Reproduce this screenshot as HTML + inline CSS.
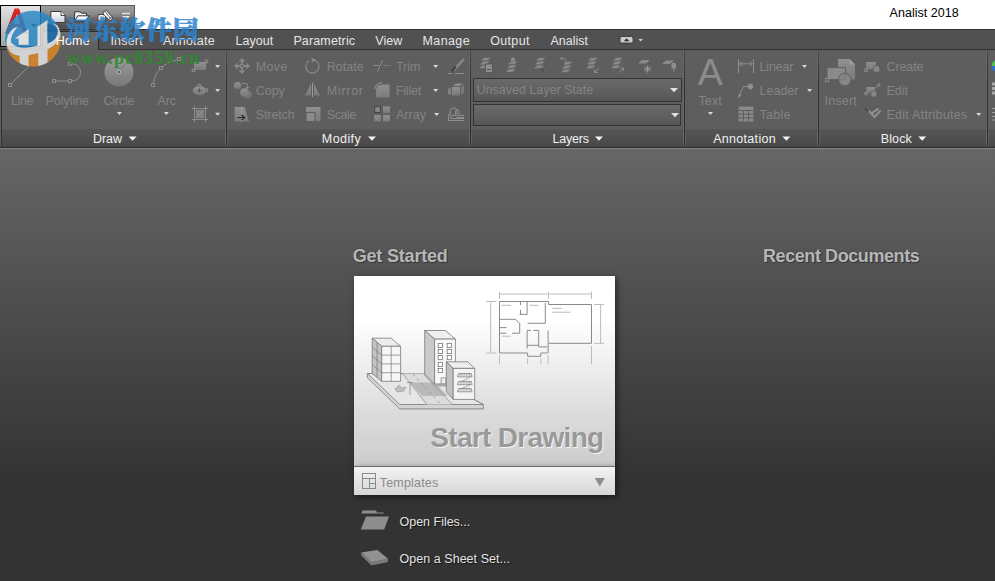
<!DOCTYPE html>
<html lang="en"><head><meta charset="utf-8"><title>Analist 2018</title>
<style>
html,body{margin:0;padding:0}
body{width:995px;height:581px;overflow:hidden;position:relative;background:#fff;font-family:"Liberation Sans",sans-serif}
.a{position:absolute}
.t{position:absolute;white-space:pre;font-family:"Liberation Sans",sans-serif}
svg{position:absolute;overflow:visible}
#bodybg{left:0;top:149px;width:995px;height:432px;background:linear-gradient(#666 0,#333 76.5%,#333 100%)}
#tabbar{left:0;top:29px;width:995px;height:20px;background:#515151;border-top:1px solid #2e2e2e;box-sizing:border-box}
#ribbon{left:0;top:49px;width:995px;height:98px;background:#5e5e5e;border-top:1px solid #2f2f2f;box-sizing:border-box}
#ribbot1{left:0;top:146px;width:995px;height:2px;background:linear-gradient(#444 0,#444 50%,#2c2c2c 50%,#2c2c2c 100%)}
#ribbot2{left:0;top:148px;width:995px;height:1px;background:#858585}
#hometab{left:42px;top:31px;width:57px;height:19px;background:linear-gradient(#6a6a6a,#5e5e5e);border:1px solid #2e2e2e;border-bottom:0;box-sizing:border-box}
#qat{left:41px;top:5px;width:94px;height:24px;background:linear-gradient(#9e9e9e 0,#8a8a8a 38%,#646464 62%,#4c4c4c 100%);border:1px solid #5a5a5a;border-left:0;box-sizing:border-box}
#appbtn{left:0;top:5px;width:41px;height:42px;background:linear-gradient(#e2e2e2,#a2a2a2);border:1px solid #000;box-sizing:border-box}
.ps{position:absolute;top:129px;height:17px;background:linear-gradient(#555,#494949)}
.sepd0{position:absolute;top:50px;height:97px;width:1px;left:1px;background:#303030}
.sepd{position:absolute;top:50px;height:97px;width:1px;background:linear-gradient(#4a4a4a 0,#303030 35%,#2e2e2e 100%)}
.sepl{position:absolute;top:50px;height:97px;width:1px;background:#666}
.combo{position:absolute;left:473px;width:209px;box-sizing:border-box;border:1px solid #333;background:linear-gradient(#6a6a6a,#575757)}
#card{left:354px;top:276px;width:261px;height:190px;background:linear-gradient(#fff 0,#fff 22%,#f0f0f0 45%,#dcdcdc 72%,#cccccc 100%);box-shadow:2px 2px 6px rgba(0,0,0,.55)}
#tpl{left:354px;top:466px;width:261px;height:29px;background:linear-gradient(#f3f3f3,#d6d6d6);border-top:1px solid #6e6e6e;box-sizing:border-box;box-shadow:2px 2px 6px rgba(0,0,0,.55)}

</style></head>
<body>
<div class="a" id="bodybg"></div>
<div class="a" id="tabbar"></div>
<div class="a" id="ribbon"></div>
<div class="a" id="hometab"></div>
<div class="a" id="qat"></div>
<div class="a" id="appbtn"></div>
<!-- panel title strips -->
<div class="ps" style="left:2px;width:223px"></div>
<div class="ps" style="left:228px;width:241px"></div>
<div class="ps" style="left:472px;width:211px"></div>
<div class="ps" style="left:686px;width:131px"></div>
<div class="ps" style="left:820px;width:166px"></div>
<div class="ps" style="left:989px;width:6px"></div>
<div class="sepd0"></div>
<div class="sepl" style="left:225px"></div><div class="sepd" style="left:226px"></div>
<div class="sepl" style="left:469px"></div><div class="sepd" style="left:470px"></div>
<div class="sepl" style="left:683px"></div><div class="sepd" style="left:684px"></div>
<div class="sepl" style="left:817px"></div><div class="sepd" style="left:818px"></div>
<div class="sepl" style="left:986px"></div><div class="sepd" style="left:987px"></div>
<div class="a" id="ribbot1"></div>
<div class="a" id="ribbot2"></div>
<div class="combo" style="top:78px;height:24px"></div>
<div class="combo" style="top:104px;height:22px;width:208px"></div>
<div class="a" id="card"></div>
<div class="a" id="tpl"></div>

<svg width="995" height="581" viewBox="0 0 995 581" style="left:0;top:0">
<defs><linearGradient id="gc" x1="0" y1="0" x2="0" y2="1"><stop offset="0" stop-color="#9c9c9c"/><stop offset="1" stop-color="#787878"/></linearGradient><linearGradient id="gi" x1="0" y1="0" x2="0" y2="1"><stop offset="0" stop-color="#909090"/><stop offset="1" stop-color="#7a7a7a"/></linearGradient></defs>
<path d="M10,85L35,60" stroke="#8e8e8e" stroke-width="1" fill="none"/>
<rect x="8.5" y="83.5" width="3" height="3" fill="#5e5e5e" stroke="#8e8e8e" stroke-width="1"/>
<rect x="33.5" y="58.5" width="3" height="3" fill="#5e5e5e" stroke="#8e8e8e" stroke-width="1"/>
<path d="M54,81H72A8.6,8.6 0 0 0 72,63.8H70" stroke="#8e8e8e" stroke-width="1" fill="none"/>
<rect x="52.5" y="79.5" width="3" height="3" fill="#5e5e5e" stroke="#8e8e8e" stroke-width="1"/>
<rect x="68.5" y="79.5" width="3" height="3" fill="#5e5e5e" stroke="#8e8e8e" stroke-width="1"/>
<rect x="68.5" y="62.3" width="3" height="3" fill="#5e5e5e" stroke="#8e8e8e" stroke-width="1"/>
<circle cx="119" cy="72" r="14.5" fill="url(#gc)"/>
<path d="M119,72L128,61" stroke="#7c7c7c" stroke-width="1"/>
<rect x="117.5" y="70.5" width="3" height="3" fill="#5e5e5e" stroke="#aaa" stroke-width="1"/>
<path d="M153,85Q155,64 179,59" stroke="#8e8e8e" stroke-width="1" fill="none"/>
<rect x="151.5" y="83.5" width="3" height="3" fill="#5e5e5e" stroke="#8e8e8e" stroke-width="1"/>
<rect x="159.5" y="66.5" width="3" height="3" fill="#5e5e5e" stroke="#8e8e8e" stroke-width="1"/>
<rect x="177.5" y="57.5" width="3" height="3" fill="#5e5e5e" stroke="#8e8e8e" stroke-width="1"/>
<path d="M116.9,111.9h5l-2.5,3z" fill="#d8d8d8"/>
<path d="M163.8,111.9h5l-2.5,3z" fill="#d8d8d8"/>
<rect x="194" y="62" width="12" height="8" fill="url(#gi)"/>
<rect x="205.2" y="60.2" width="2.5" height="2.5" fill="#5e5e5e" stroke="#8e8e8e" stroke-width="1"/>
<rect x="192.2" y="69.2" width="2.5" height="2.5" fill="#5e5e5e" stroke="#8e8e8e" stroke-width="1"/>
<ellipse cx="199.4" cy="90.6" rx="6.6" ry="4.6" fill="url(#gi)"/>
<rect x="198.2" y="84.5" width="2.5" height="2.5" fill="#5e5e5e" stroke="#8e8e8e" stroke-width="1"/>
<rect x="205.1" y="89.0" width="2.5" height="2.5" fill="#5e5e5e" stroke="#8e8e8e" stroke-width="1"/>
<path d="M197.5,90.6h4M199.5,88.6v4" stroke="#555" stroke-width="1"/>
<path d="M192,108.5h16M192,119.5h16M194.5,106v16M205.5,106v16" stroke="#8e8e8e" stroke-width="1"/>
<rect x="196" y="110" width="8" height="8" fill="#8a8a8a"/>
<path d="M196,113l3,-3M196,116l6,-6M198,118l6,-6M201,118l3,-3" stroke="#707070" stroke-width="1"/>
<path d="M215.1,65.0h5l-2.5,3z" fill="#d8d8d8"/>
<path d="M215.1,88.9h5l-2.5,3z" fill="#d8d8d8"/>
<path d="M215.1,112.8h5l-2.5,3z" fill="#d8d8d8"/>
<path d="M242,58l3.5,3.5h-2.5v2.5h-2v-2.5h-2.5zM242,74l3.5,-3.5h-2.5v-2.5h-2v2.5h-2.5zM234,66l3.5,-3.5v2.5h2.5v2h-2.5v2.5zM250,66l-3.5,-3.5v2.5h-2.5v2h2.5v2.5z" fill="#868686"/>
<rect x="240.5" y="64.5" width="3" height="3" fill="none" stroke="#868686"/>
<circle cx="248" cy="94.5" r="4" fill="#747474"/><circle cx="237.5" cy="85.5" r="3.6" fill="url(#gi)"/><circle cx="244.3" cy="92.5" r="4.3" fill="url(#gi)"/>
<path d="M242,83.5h3.5a2,2 0 0 1 2,2v2" stroke="#8e8e8e" fill="none"/><path d="M245.5,87h4l-2,2.5z" fill="#8e8e8e"/>
<path d="M234.5,107h10l4.5,14.5h-14.5z" fill="url(#gi)"/><path d="M241.5,106.5v15.5" stroke="#9a9a9a" stroke-width="1"/>
<path d="M237.5,117.5h6M241.5,115l3,2.5l-3,2.5" stroke="#2a2a2a" stroke-width="1.2" fill="none"/>
<path d="M314.5,60.2A6.6,6.6 0 1 1 309,60.8" stroke="#868686" stroke-width="1.3" fill="none"/><path d="M311.5,57.5l5,2.6l-4.6,2.6z" fill="#868686"/>
<path d="M311,84v11.5h-6zM314,84v11.5h6z" fill="url(#gi)"/><path d="M312.5,82.5v14.5" stroke="#9a9a9a" stroke-width="1"/>
<rect x="306" y="107" width="14.5" height="14.5" fill="url(#gi)"/><rect x="306" y="112.5" width="9" height="9" fill="#8c8c8c" stroke="#5e5e5e" stroke-width="1.2"/>
<path d="M374,65.5h4.5M377.4,71.6L382.7,60" stroke="#8e8e8e" stroke-width="1" fill="none"/><path d="M383.5,65.5h7" stroke="#8e8e8e" stroke-width="1" stroke-dasharray="1.5,1.2"/>
<path d="M376,97.5v-7a6,6 0 0 1 6,-6h7.5v13z" fill="url(#gi)"/>
<path d="M374.5,89a9,9 0 0 1 7.5,-6.5" stroke="#868686" stroke-width="1.3" fill="none"/>
<rect x="374.7" y="106.8" width="5.6" height="5.6" fill="#8c8c8c" stroke="#444" stroke-width="1"/>
<rect x="383" y="106.3" width="7" height="6.6" fill="url(#gi)"/><rect x="374.2" y="115" width="6.6" height="6.6" fill="url(#gi)"/><rect x="383" y="115" width="7" height="6.6" fill="url(#gi)"/>
<path d="M433.2,64.9h5l-2.5,3z" fill="#d8d8d8"/>
<path d="M433.2,88.9h5l-2.5,3z" fill="#d8d8d8"/>
<path d="M434.2,112.9h5l-2.5,3z" fill="#d8d8d8"/>
<path d="M464,59L453,71" stroke="#8a8a8a" stroke-width="2.4"/><path d="M455.5,66.5L452,71.5" stroke="#444" stroke-width="2.4"/><path d="M448,73.5h4M455,73.5h9" stroke="#8e8e8e" stroke-width="1"/>
<path d="M452,87h8v8.5h-8z" fill="url(#gi)"/><path d="M453,86l3,-2.5h7l-3,2.5z" fill="#8c8c8c"/><path d="M461,87l3,-2.5v8l-3,2.5z" fill="#7a7a7a"/><path d="M448,89l3,-2v8l-3,-1z" fill="#808080"/>
<path d="M448.5,120.5h15.5M464,117.5h-7v-6a3.5,3.5 0 0 0 -7,0v3h-1.5v6" stroke="#8e8e8e" stroke-width="1" fill="none"/><path d="M464,115.5h-5v-4.5a1.8,1.8 0 0 0 -3.4,0v4.5h-5v3h13.4" stroke="#8e8e8e" stroke-width="1" fill="none"/>
<path d="M484.2,57.8h6.5l-3.2,2.8h-6.5z" fill="#888888"/>
<path d="M483.2,61.6h6.5l-3.2,2.8h-6.5z" fill="#888888"/>
<path d="M482.2,65.4h6.5l-3.2,2.8h-6.5z" fill="#888888"/>
<rect x="485.5" y="64" width="7" height="8.5" fill="#8e8e8e" stroke="#505050" stroke-width=".8"/><path d="M487,69.5h4" stroke="#555" stroke-width="1"/>
<path d="M511.2,61.5h6.5l-3.2,2.8h-6.5z" fill="#888888"/>
<path d="M510.2,65.3h6.5l-3.2,2.8h-6.5z" fill="#888888"/>
<path d="M509.2,69.1h6.5l-3.2,2.8h-6.5z" fill="#888888"/>
<circle cx="513" cy="59.6" r="2.2" fill="#8a8a8a"/>
<path d="M539.2,57.8h6.5l-3.2,2.8h-6.5z" fill="#888888"/>
<path d="M538.2,61.6h6.5l-3.2,2.8h-6.5z" fill="#888888"/>
<path d="M537.2,65.4h6.5l-3.2,2.8h-6.5z" fill="#888888"/>
<path d="M542,67l4,4" stroke="#8e8e8e" stroke-width="1"/><circle cx="543" cy="70" r="2" fill="#555"/>
<path d="M566.2,61.8h6.5l-3.2,2.8h-6.5z" fill="#888888"/>
<path d="M565.2,65.6h6.5l-3.2,2.8h-6.5z" fill="#888888"/>
<path d="M564.2,69.4h6.5l-3.2,2.8h-6.5z" fill="#888888"/>
<path d="M560.5,58.5h3a2.5,2.5 0 0 1 2.5,2.5v1M560.5,58.5l2,-1.8M560.5,58.5l2,1.8" stroke="#8e8e8e" fill="none"/>
<path d="M591.2,57.8h6.5l-3.2,2.8h-6.5z" fill="#888888"/>
<path d="M590.2,61.6h6.5l-3.2,2.8h-6.5z" fill="#888888"/>
<path d="M589.2,65.4h6.5l-3.2,2.8h-6.5z" fill="#888888"/>
<path d="M599,68l-4.5,4.5M594.5,69.5v3h3" stroke="#8e8e8e" fill="none"/>
<path d="M616.2,57.8h6.5l-3.2,2.8h-6.5z" fill="#888888"/>
<path d="M615.2,61.6h6.5l-3.2,2.8h-6.5z" fill="#888888"/>
<path d="M614.2,65.4h6.5l-3.2,2.8h-6.5z" fill="#888888"/>
<path d="M619,72.5l4.5,-4.5M620.5,68h3v3" stroke="#8e8e8e" fill="none"/>
<path d="M642,60h8l-4,3.6h-8z" fill="#8a8a8a"/>
<path d="M644,69h7M647.5,65.5v7M645,66.5l5,5M650,66.5l-5,5" stroke="#9a9a9a" stroke-width="1"/>
<path d="M666,60.5h8l-4,3.6h-8z" fill="#8a8a8a"/>
<path d="M671.5,65a2.3,2.6 0 0 1 4.6,0v3.5h-4.6z" fill="#8e8e8e"/><path d="M673.8,68.5v3.5" stroke="#8e8e8e"/>
<path d="M670.0,88.1h8l-4.0,4.2z" fill="#e2e2e2"/>
<path d="M671.0,113.1h8l-4.0,4.2z" fill="#e2e2e2"/>
<path d="M708.0,112.1h5l-2.5,3z" fill="#d8d8d8"/>
<path d="M738.5,59v14M753.5,59v14M739.5,63.8h13M742.5,61.5l-3,2.3l3,2.3M749.5,61.5l3,2.3l-3,2.3" stroke="#8e8e8e" stroke-width="1" fill="none"/>
<circle cx="750.4" cy="86.6" r="2.8" fill="#8e8e8e"/><path d="M748,86.6h-4.5l-4.5,9.5" stroke="#8e8e8e" fill="none"/><path d="M738.3,98l0.2,-4.5l3.3,1.7z" fill="#8e8e8e"/>
<rect x="738.7" y="106.4" width="14.8" height="15.2" fill="#8a8a8a"/><path d="M738.7,110.5h14.8M738.7,114.2h14.8M738.7,117.9h14.8M743.5,110.5v11M748.5,110.5v11" stroke="#5e5e5e" stroke-width="1"/><rect x="738.7" y="106.4" width="14.8" height="15.2" fill="none" stroke="#6e6e6e" stroke-width=".8"/>
<path d="M802.0,64.9h5l-2.5,3z" fill="#d8d8d8"/>
<path d="M807.1,88.9h5l-2.5,3z" fill="#d8d8d8"/>
<path d="M838,59h11.5l5.5,5.5v15h-17z" fill="url(#gi)"/><path d="M849.5,59v5.5h5.5z" fill="#a0a0a0"/>
<rect x="827" y="67.6" width="18.5" height="12" fill="#8a8a8a" stroke="#5e5e5e" stroke-width="1"/>
<circle cx="844.8" cy="79.6" r="6.3" fill="#868686" stroke="#5e5e5e" stroke-width="1"/><path d="M844.8,73.5v6.1h-6" stroke="#7a7a7a" fill="none"/>
<rect x="825.4" y="78.4" width="3.2" height="3.2" fill="#5e5e5e" stroke="#8e8e8e" stroke-width="1"/>
<rect x="866.2" y="62" width="9.6" height="7.3" fill="url(#gi)"/><circle cx="876.5" cy="69" r="3.6" fill="#868686" stroke="#5e5e5e" stroke-width=".8"/>
<rect x="864.8" y="69.0" width="2.4" height="2.4" fill="#5e5e5e" stroke="#8e8e8e" stroke-width="1"/>
<rect x="866.5" y="87" width="8.5" height="6" fill="url(#gi)"/><circle cx="873.8" cy="94" r="3.2" fill="#868686" stroke="#5e5e5e" stroke-width=".8"/>
<rect x="864.9" y="92.4" width="2.2" height="2.2" fill="#5e5e5e" stroke="#8e8e8e" stroke-width="1"/>
<path d="M876,88l4,-5M877.5,84.5l3,2" stroke="#8c8c8c" stroke-width="1.2"/>
<path d="M865,107.5l1.5,3.5h3" stroke="#444" fill="none"/><path d="M869,111l5.5,6l6,-6.5" stroke="#8e8e8e" stroke-width="2.2" fill="none"/><path d="M872,113l6.5,-4.5" stroke="#9a9a9a" stroke-width="1.6"/>
<path d="M976.2,112.9h5l-2.5,3z" fill="#d8d8d8"/>
<circle cx="998" cy="66" r="6.300" fill="#2f6fd8"/><path d="M991.700,66a6.300,6.300 0 0 1 3.300,-5.500v5.500z" fill="#58c048"/>
<path d="M992,84h3M992,88.500h3M992,93h3" stroke="#a8a8a8" stroke-width="3"/><path d="M992,108.500h3M992,112.500h3M992,116.500h3M992,120h3" stroke="#a0a0a0" stroke-width="1"/>
<rect x="620" y="36.500" width="13" height="6.500" rx="1.600" fill="#c6cad2" stroke="#2e2e2e" stroke-width=".8"/><path d="M623.8,41.3l2.8,-3l2.8,3z" fill="#333"/>
<path d="M638.3,39.0h4.6l-2.3,2.6z" fill="#d0d0d0"/>
<path d="M128.6,136.4h8l-4.0,4.4z" fill="#f4f4f4"/>
<path d="M368.0,136.4h8l-4.0,4.4z" fill="#f4f4f4"/>
<path d="M595.0,136.4h8l-4.0,4.4z" fill="#f4f4f4"/>
<path d="M782.4,136.4h8l-4.0,4.4z" fill="#f4f4f4"/>
<path d="M918.2,136.4h8l-4.0,4.4z" fill="#f4f4f4"/>
</svg>
<svg width="995" height="581" viewBox="0 0 995 581" style="left:0;top:0">
<defs>
<linearGradient id="doc" x1="0" y1="0" x2="0" y2="1"><stop offset="0" stop-color="#ffffff"/><stop offset="1" stop-color="#c8cfe0"/></linearGradient>
<linearGradient id="red" x1="0" y1="0" x2="0" y2="1"><stop offset="0" stop-color="#e02a2a"/><stop offset="1" stop-color="#a01414"/></linearGradient>
<linearGradient id="fold" x1="0" y1="0" x2="0" y2="1"><stop offset="0" stop-color="#ffffff"/><stop offset=".55" stop-color="#e8eef8"/><stop offset="1" stop-color="#6f9fdc"/></linearGradient>
<clipPath id="lc"><circle cx="33" cy="38.7" r="28"/></clipPath>
</defs>
<path d="M367.4,373.5H424.7L483.3,404.5V408.9H399.8L367.4,377.8z" fill="#d4d4d4" stroke="#787878" stroke-width=".8"/>
<path d="M367.4,373.5H424.7L483.3,404.5H399.8z" fill="#e6e6e6" stroke="#787878" stroke-width=".8"/>
<path d="M402.500,373.500H424L452.500,404.500H426z" fill="#dcdcdc"/>
<path d="M409.800,382.500L434.600,382.500L448,395.900H422.200z" fill="#adadad" opacity=".75"/>
<path d="M402.5,373.5L427,404.5M424,374.5L452.5,404.5" stroke="#8a8a8a" stroke-width=".7"/>
<path d="M413,374L441,404.5" stroke="#8a8a8a" stroke-width=".7" stroke-dasharray="3,3"/>
<path d="M372.2,338.2H391.2L400.6,346.3H381.7z" fill="#ececec" stroke="#787878" stroke-width=".8"/>
<path d="M372.2,338.2L381.7,346.3V381.3L372.2,373.5z" fill="#c4c4c4" stroke="#787878" stroke-width=".8"/>
<path d="M381.7,346.3H400.6V381.3H381.7z" fill="#f6f6f6" stroke="#787878" stroke-width=".8"/>
<path d="M391.2,346.3V381.3M381.7,355.1H400.6M381.7,363.9H400.6M381.7,372.7H400.6M377,342.2V377.4M372.2,347L381.7,355.1M372.2,355.8L381.7,363.9M372.2,364.6L381.7,372.7" stroke="#787878" stroke-width=".7" fill="none"/>
<path d="M424.7,330.5H445.4L455.4,339.1H434.6z" fill="#f0f0f0" stroke="#787878" stroke-width=".8"/>
<path d="M424.7,330.5L434.6,339.1V383.9L424.7,374.4z" fill="#cacaca" stroke="#787878" stroke-width=".8"/>
<path d="M434.6,339.1H455.4V383.9H434.6z" fill="#f8f8f8" stroke="#787878" stroke-width=".8"/>
<rect x="438.2" y="343.4" width="4.2" height="4.2" fill="#fff" stroke="#787878" stroke-width=".8"/>
<rect x="447.2" y="343.4" width="4.2" height="4.2" fill="#fff" stroke="#787878" stroke-width=".8"/>
<rect x="438.2" y="349.4" width="4.2" height="4.2" fill="#fff" stroke="#787878" stroke-width=".8"/>
<rect x="447.2" y="349.4" width="4.2" height="4.2" fill="#fff" stroke="#787878" stroke-width=".8"/>
<rect x="438.2" y="355.5" width="4.2" height="4.2" fill="#fff" stroke="#787878" stroke-width=".8"/>
<rect x="447.2" y="355.5" width="4.2" height="4.2" fill="#fff" stroke="#787878" stroke-width=".8"/>
<rect x="438.2" y="362.4" width="4.2" height="4.2" fill="#fff" stroke="#787878" stroke-width=".8"/>
<rect x="447.2" y="362.4" width="4.2" height="4.2" fill="#fff" stroke="#787878" stroke-width=".8"/>
<rect x="438.2" y="368.4" width="4.2" height="4.2" fill="#fff" stroke="#787878" stroke-width=".8"/>
<rect x="447.2" y="368.4" width="4.2" height="4.2" fill="#fff" stroke="#787878" stroke-width=".8"/>
<rect x="441.1" y="377.9" width="4.8" height="6" fill="#eee" stroke="#787878" stroke-width=".7"/>
<path d="M434.6,383.9H455.4V386.5H437.5z" fill="#a8a8a8"/>
<path d="M446.3,361.8H467.8L474.7,368.4H453.2z" fill="#eeeeee" stroke="#787878" stroke-width=".8"/>
<path d="M446.3,361.8L453.2,368.4V399.4L446.3,391.6z" fill="#c2c2c2" stroke="#787878" stroke-width=".8"/>
<path d="M453.2,368.4H474.7V399.4H453.2z" fill="#f4f4f4" stroke="#787878" stroke-width=".8"/>
<path d="M458.5,373.5H471.2L472.1,376.9H457.5z" fill="#ddd" stroke="#787878" stroke-width=".7"/>
<path d="M461,373.5v2M464,373.5v2M467,373.5v2M469.6,373.5v2" stroke="#787878" stroke-width=".6"/>
<path d="M458.5,381.3H471.2L472.1,384.7H457.5z" fill="#ddd" stroke="#787878" stroke-width=".7"/>
<path d="M461,381.3v2M464,381.3v2M467,381.3v2M469.6,381.3v2" stroke="#787878" stroke-width=".6"/>
<path d="M458.5,388.4H471.2L472.1,391.79999999999995H457.5z" fill="#ddd" stroke="#787878" stroke-width=".7"/>
<path d="M461,388.4v2M464,388.4v2M467,388.4v2M469.6,388.4v2" stroke="#787878" stroke-width=".6"/>
<path d="M470,377L462,381.3M470,384.8L462,388.4" stroke="#787878" stroke-width=".6"/>
<path d="M395,389l4,-4l3,3l4,-1l-2,4l-7,1z" fill="#bdbdbd" stroke="#8a8a8a" stroke-width=".5"/>
<path d="M410,383v12M407,382.500h6" stroke="#8a8a8a" stroke-width=".8"/>
<path d="M499.5,301.5H548.6V304.5H591.5V343.3H548.6M548.1,330.4V353M499.5,301.5V353H527.6V356.3H540.8V353H547.6" stroke="#8a8a8a" stroke-width="1" fill="none"/>
<path d="M520.5,301.5V305M520.5,309.7V314.4M519.7,314.4H527.1V301.5M545.3,303.1V323.3H527.6M499.5,319.3H515.5L519.7,323.3V333.2H512.2M499.5,327.6H506.4M499.5,333.2H506.4M527.1,348.6V330.4H531M533.5,330.4H538.7V346.9H547.4M527.1,345.3H538.7" stroke="#8a8a8a" stroke-width="1" fill="none"/>
<path d="M501.5,305.3H511M529.6,305.3H538.2M552.4,308.4H561.8M552.4,312.2H570.5M502.3,336.200H511" stroke="#b8b8b8" stroke-width="1"/>
<path d="M499.5,294H548M549.6,294H591.5M499.5,291.6V299M548.6,291.6V299M591.5,291.6V299M490.7,302.3V352.7M486.3,301.5H496.5M486.3,353H496.5M600.6,304.8V343.3M594,304.5H604M594,343.3H604M499.5,355.2V364.3M527.6,358.5V364.3M540.8,358.5V364.3M548.1,355.2V364.3M591.5,346V364.3" stroke="#bcbcbc" stroke-width="1" fill="none"/>
<rect x="362.500" y="473.500" width="13" height="15" fill="none" stroke="#8a8a8a" stroke-width="1"/><path d="M362.500,478.500h13M369.500,478.500v10M369.500,483.500h6" stroke="#8a8a8a" stroke-width="1"/>
<path d="M594.8,478h10l-5,8.4z" fill="#8c8c8c"/>
<path d="M361.300,513.600l1.200,-3h13.500l1,1.800h6.600l.5,1.200zM366,516.500H389L384.100,529.500H360.800z" fill="#8e8e8e"/>
<path d="M361.300,552.500L371.500,562.200L388,558.700V562L371.500,565.600L361.300,555.600z" fill="#7a7a7a"/><path d="M361.300,552.500L377.300,550L388,558.700L371.500,562.200z" fill="#929292"/>
<path d="M50.800,11.500H61L65,15.500V22.500H50.800z" fill="url(#doc)" stroke="#3a3a3a" stroke-width="1"/><path d="M61,11.500V15.500H65" fill="#f4f6fa" stroke="#3a3a3a" stroke-width=".9"/>
<path d="M74.600,20.500V11.800H80L81.500,13.200H86.500V15.800" fill="#eef0f5" stroke="#333" stroke-width="1"/><path d="M74.600,21L77.800,15.800H89.200L85.500,21z" fill="url(#fold)" stroke="#333" stroke-width="1"/>
<path d="M98,14.500H105.500V21H98z" fill="#f4f6fa" stroke="#3a3a3a" stroke-width=".9"/><path d="M98.500,15l6,5.500M104.500,15l-6,5.500" stroke="#777" stroke-width=".7"/>
<path d="M103,12.200L106.500,10.400L113,18L110.200,21L103.600,14.800z" fill="#eceef2" stroke="#3a3a3a" stroke-width=".9"/><path d="M105,11.500l6.500,8M109.500,20.800a1.800,1.800 0 0 1 3,-2.600" stroke="#555" stroke-width=".8" fill="none"/>
<path d="M122,13.500h8" stroke="#e8e8e8" stroke-width="1.400"/><path d="M122,16h8l-4,4.200z" fill="#e8e8e8"/>
<path d="M5.200,33.500L14.600,8.500H19L27.800,33.500H23.300L21.200,27.500H12.600L10,33.500zM13.800,23.800H19.900L16.900,14z" fill="url(#red)" fill-rule="evenodd"/>
<path d="M31,24h6l-3,3.600z" fill="#222"/>
<path d="M0.500,47.500H41.500" stroke="#777" stroke-width="1" opacity=".0"/>
<g clip-path="url(#lc)" opacity=".84">
<rect x="4" y="9" width="59" height="60" fill="#2a8ac8"/>
<path d="M6.500,43C7,50 12,55 19.300,55.700C28,56.500 40,53 48.200,48.800C56,45 61,38 61.500,30L63,70H4z" fill="#de8a22"/>
<path d="M19.600,50H28.600V68H19.600zM38.200,48H47.500V68H38.200z" fill="#e9e9e9"/>
<path d="M6.500,43C7,34 11,29 18,26.500C14,31 10.500,36 11,42.500C16,48.500 27,49.500 38.500,45C44,43 48.500,40 52,35L61.500,29C61,38 56,45 48.200,48.800C40,53 28,56.500 19.300,55.700C12,55 7,50 6.500,43z" fill="#e9e9e9"/>
<path d="M14.800,38.500L28.600,28.900V44.700H18.600V38.500z" fill="#e9e9e9"/>
<path d="M37.500,26.800L47.500,20V47L37.500,49.500z" fill="#e9e9e9"/>
<path d="M47.500,43.500C52,42 56.500,39 57.500,34C58.500,30 57,26 53,23.500C58,25 61,28 61.500,31C61,38 56,45 48.200,48.800L47.500,49z" fill="#e9e9e9"/>
<path d="M47.500,23.500C56,25 58.500,30 57.500,34C56.500,39 52,42 47.500,43.500z" fill="#1b6cab"/>
</g>
</svg>
<!-- text labels -->
<span class="t" style="left:889.6px;top:5.0px;font-size:12.5px;line-height:16px;letter-spacing:0.02px;color:#000;">Analist 2018</span>
<span class="t" style="left:55.7px;top:33.0px;font-size:12.5px;line-height:16px;letter-spacing:0.19px;color:#ffffff;">Home</span>
<span class="t" style="left:110.4px;top:33.0px;font-size:12.5px;line-height:16px;letter-spacing:0.19px;color:#e6e6e6;">Insert</span>
<span class="t" style="left:163.0px;top:33.0px;font-size:12.5px;line-height:16px;letter-spacing:0.22px;color:#e6e6e6;">Annotate</span>
<span class="t" style="left:235.6px;top:33.0px;font-size:12.5px;line-height:16px;letter-spacing:0.03px;color:#e6e6e6;">Layout</span>
<span class="t" style="left:293.4px;top:33.0px;font-size:12.5px;line-height:16px;letter-spacing:0.14px;color:#e6e6e6;">Parametric</span>
<span class="t" style="left:375.3px;top:33.0px;font-size:12.5px;line-height:16px;letter-spacing:0.01px;color:#e6e6e6;">View</span>
<span class="t" style="left:422.5px;top:33.0px;font-size:12.5px;line-height:16px;letter-spacing:0.39px;color:#e6e6e6;">Manage</span>
<span class="t" style="left:490.2px;top:33.0px;font-size:12.5px;line-height:16px;letter-spacing:0.34px;color:#e6e6e6;">Output</span>
<span class="t" style="left:550.5px;top:33.0px;font-size:12.5px;line-height:16px;letter-spacing:0.01px;color:#e6e6e6;">Analist</span>
<span class="t" style="left:11.0px;top:92.5px;font-size:12.5px;line-height:16px;letter-spacing:-0.41px;color:#848484;">Line</span>
<span class="t" style="left:45.4px;top:92.5px;font-size:12.5px;line-height:16px;letter-spacing:-0.02px;color:#848484;">Polyline</span>
<span class="t" style="left:103.5px;top:92.5px;font-size:12.5px;line-height:16px;letter-spacing:-0.19px;color:#848484;">Circle</span>
<span class="t" style="left:157.5px;top:92.5px;font-size:12.5px;line-height:16px;letter-spacing:-0.15px;color:#848484;">Arc</span>
<span class="t" style="left:255.7px;top:59.0px;font-size:12.5px;line-height:16px;letter-spacing:0.38px;color:#848484;">Move</span>
<span class="t" style="left:255.7px;top:83.0px;font-size:12.5px;line-height:16px;letter-spacing:-0.02px;color:#848484;">Copy</span>
<span class="t" style="left:255.7px;top:107.0px;font-size:12.5px;line-height:16px;letter-spacing:-0.1px;color:#848484;">Stretch</span>
<span class="t" style="left:326.8px;top:59.0px;font-size:12.5px;line-height:16px;letter-spacing:0.01px;color:#848484;">Rotate</span>
<span class="t" style="left:326.8px;top:83.0px;font-size:12.5px;line-height:16px;letter-spacing:0.71px;color:#848484;">Mirror</span>
<span class="t" style="left:326.8px;top:107.0px;font-size:12.5px;line-height:16px;letter-spacing:-0.48px;color:#848484;">Scale</span>
<span class="t" style="left:395.9px;top:59.0px;font-size:12.5px;line-height:16px;letter-spacing:0.02px;color:#848484;">Trim</span>
<span class="t" style="left:395.9px;top:83.0px;font-size:12.5px;line-height:16px;letter-spacing:-0.22px;color:#848484;">Fillet</span>
<span class="t" style="left:395.9px;top:107.0px;font-size:12.5px;line-height:16px;letter-spacing:0.05px;color:#848484;">Array</span>
<span class="t" style="left:476.6px;top:82.0px;font-size:12.5px;line-height:16px;letter-spacing:-0.01px;color:#848484;">Unsaved Layer State</span>
<span class="t" style="left:697.7px;top:47.8px;font-size:37.5px;line-height:49px;letter-spacing:0.18px;color:#8c8c8c;">A</span>
<span class="t" style="left:698.4px;top:92.7px;font-size:12.5px;line-height:16px;letter-spacing:0.17px;color:#848484;">Text</span>
<span class="t" style="left:759.6px;top:59.0px;font-size:12.5px;line-height:16px;letter-spacing:-0.19px;color:#848484;">Linear</span>
<span class="t" style="left:759.6px;top:83.0px;font-size:12.5px;line-height:16px;letter-spacing:-0.01px;color:#848484;">Leader</span>
<span class="t" style="left:759.6px;top:107.0px;font-size:12.5px;line-height:16px;letter-spacing:0.24px;color:#848484;">Table</span>
<span class="t" style="left:824.6px;top:92.9px;font-size:12.5px;line-height:16px;letter-spacing:0.19px;color:#848484;">Insert</span>
<span class="t" style="left:886.5px;top:59.0px;font-size:12.5px;line-height:16px;letter-spacing:-0.11px;color:#848484;">Create</span>
<span class="t" style="left:886.5px;top:83.0px;font-size:12.5px;line-height:16px;letter-spacing:-0.06px;color:#848484;">Edit</span>
<span class="t" style="left:886.5px;top:107.0px;font-size:12.5px;line-height:16px;letter-spacing:0.25px;color:#848484;">Edit Attributes</span>
<span class="t" style="left:92.9px;top:130.5px;font-size:12.5px;line-height:16px;letter-spacing:-0.02px;color:#f2f2f2;">Draw</span>
<span class="t" style="left:321.8px;top:130.5px;font-size:12.5px;line-height:16px;letter-spacing:0.43px;color:#f2f2f2;">Modify</span>
<span class="t" style="left:552.5px;top:130.5px;font-size:12.5px;line-height:16px;letter-spacing:-0.19px;color:#f2f2f2;">Layers</span>
<span class="t" style="left:713.2px;top:130.5px;font-size:12.5px;line-height:16px;letter-spacing:0.3px;color:#f2f2f2;">Annotation</span>
<span class="t" style="left:880.7px;top:130.5px;font-size:12.5px;line-height:16px;letter-spacing:0.14px;color:#f2f2f2;">Block</span>
<span class="t" style="left:352.7px;top:245.1px;font-size:18px;line-height:23px;letter-spacing:-0.19px;color:#b6b6b6;font-weight:bold;text-shadow:1px 1px 0 #383838,0 0 2px #3a3a3a;">Get Started</span>
<span class="t" style="left:763.0px;top:245.4px;font-size:18px;line-height:23px;letter-spacing:-0.42px;color:#b6b6b6;font-weight:bold;text-shadow:1px 1px 0 #383838,0 0 2px #3a3a3a;">Recent Documents</span>
<span class="t" style="left:430.3px;top:420.0px;font-size:28px;line-height:36px;letter-spacing:-0.68px;color:#999999;font-weight:bold;text-shadow:1px 1px 0 #f4f4f4;">Start Drawing</span>
<span class="t" style="left:379.8px;top:474.5px;font-size:12.5px;line-height:16px;letter-spacing:0.18px;color:#8a8a8a;">Templates</span>
<span class="t" style="left:399.5px;top:513.5px;font-size:12.5px;line-height:16px;letter-spacing:-0.01px;color:#e4e4e4;text-shadow:1px 1px 1px #111;">Open Files...</span>
<span class="t" style="left:399.5px;top:550.9px;font-size:12.5px;line-height:16px;letter-spacing:0.04px;color:#e4e4e4;text-shadow:1px 1px 1px #111;">Open a Sheet Set...</span>
<span class="t" style="left:65.9px;top:13.6px;font-size:25.5px;line-height:33px;letter-spacing:1.26px;color:#2b83cc;font-weight:900;font-family:&quot;Liberation Serif&quot;,&quot;Noto Serif CJK SC&quot;,serif;opacity:.85;-webkit-text-stroke:.7px #2b83cc;">河东软件园</span>
<span class="t" style="left:67.0px;top:46.8px;font-size:18px;line-height:23px;letter-spacing:1.11px;color:#2e8b2e;font-weight:bold;font-family:&quot;Liberation Serif&quot;,serif;opacity:.88;-webkit-text-stroke:.2px #2e8b2e;">www.pc0359.cn</span>
</body></html>
